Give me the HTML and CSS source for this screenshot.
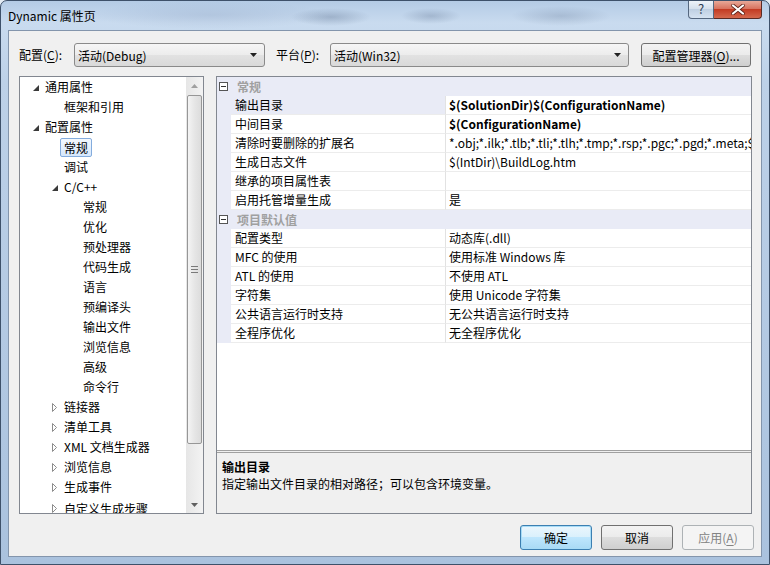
FILE: index.html
```html
<!DOCTYPE html>
<html lang="zh-CN">
<head>
    <meta charset="UTF-8">
    <title>Dynamic 属性页</title>
    <link rel="stylesheet" href="styles.css">
</head>
<body>
<div class="window">
    <div class="titlebar">
        <span class="title">Dynamic 属性页</span>
        <div class="caption">
            <div class="cap-help">?</div>
            <div class="cap-close">
                <svg width="14" height="11" viewBox="0 0 14 11">
                    <path d="M2 1.5L12 9.5M12 1.5L2 9.5" stroke="#5a1f16" stroke-width="3.6" stroke-linecap="round"/>
                    <path d="M2 1.5L12 9.5M12 1.5L2 9.5" stroke="#fff" stroke-width="2.2" stroke-linecap="round"/>
                </svg>
            </div>
        </div>
    </div>

    <div class="client">
        <div class="toolbar">
            <span class="lbl lbl-config">配置(<u>C</u>):</span>
            <div class="combo combo-config">
                <span>活动(Debug)</span>
                <svg width="7" height="4"><path d="M0 0H7L3.5 4Z" fill="#222"/></svg>
            </div>
            <span class="lbl lbl-platform">平台(<u>P</u>):</span>
            <div class="combo combo-platform">
                <span>活动(Win32)</span>
                <svg width="7" height="4"><path d="M0 0H7L3.5 4Z" fill="#222"/></svg>
            </div>
            <div class="btn btn-mgr">配置管理器(<u>O</u>)...</div>
        </div>

        <div class="main">
            <div class="tree">
                <div class="tree-list">
                    <div class="node l0"><span class="twisty open"><svg width="6" height="6"><path d="M6 0V6H0Z" fill="#3a3a3a"/></svg></span>通用属性</div>
                    <div class="node l1"><span class="twisty"></span>框架和引用</div>
                    <div class="node l0"><span class="twisty open"><svg width="6" height="6"><path d="M6 0V6H0Z" fill="#3a3a3a"/></svg></span>配置属性</div>
                    <div class="node l1"><span class="twisty"></span><span class="sel">常规</span></div>
                    <div class="node l1"><span class="twisty"></span>调试</div>
                    <div class="node l1"><span class="twisty open"><svg width="6" height="6"><path d="M6 0V6H0Z" fill="#3a3a3a"/></svg></span>C/C++</div>
                    <div class="node l2"><span class="twisty"></span>常规</div>
                    <div class="node l2"><span class="twisty"></span>优化</div>
                    <div class="node l2"><span class="twisty"></span>预处理器</div>
                    <div class="node l2"><span class="twisty"></span>代码生成</div>
                    <div class="node l2"><span class="twisty"></span>语言</div>
                    <div class="node l2"><span class="twisty"></span>预编译头</div>
                    <div class="node l2"><span class="twisty"></span>输出文件</div>
                    <div class="node l2"><span class="twisty"></span>浏览信息</div>
                    <div class="node l2"><span class="twisty"></span>高级</div>
                    <div class="node l2"><span class="twisty"></span>命令行</div>
                    <div class="node l1"><span class="twisty"><svg width="5" height="9"><path d="M0.5 0.5L4.5 4.5L0.5 8.5Z" fill="none" stroke="#8c8c8c"/></svg></span>链接器</div>
                    <div class="node l1"><span class="twisty"><svg width="5" height="9"><path d="M0.5 0.5L4.5 4.5L0.5 8.5Z" fill="none" stroke="#8c8c8c"/></svg></span>清单工具</div>
                    <div class="node l1"><span class="twisty"><svg width="5" height="9"><path d="M0.5 0.5L4.5 4.5L0.5 8.5Z" fill="none" stroke="#8c8c8c"/></svg></span>XML 文档生成器</div>
                    <div class="node l1"><span class="twisty"><svg width="5" height="9"><path d="M0.5 0.5L4.5 4.5L0.5 8.5Z" fill="none" stroke="#8c8c8c"/></svg></span>浏览信息</div>
                    <div class="node l1"><span class="twisty"><svg width="5" height="9"><path d="M0.5 0.5L4.5 4.5L0.5 8.5Z" fill="none" stroke="#8c8c8c"/></svg></span>生成事件</div>
                    <div class="node l1 last"><span class="twisty"><svg width="5" height="9"><path d="M0.5 0.5L4.5 4.5L0.5 8.5Z" fill="none" stroke="#8c8c8c"/></svg></span>自定义生成步骤</div>
                </div>
                <div class="vscroll">
                    <div class="sb-arrow"><svg width="7" height="4"><path d="M0 4H7L3.5 0Z" fill="#a0a0a0"/></svg></div>
                    <div class="thumb">
                        <div class="grip"></div>
                    </div>
                    <div class="sb-space"></div>
                    <div class="sb-arrow"><svg width="7" height="4"><path d="M0 0H7L3.5 4Z" fill="#606060"/></svg></div>
                </div>
            </div>

            <div class="props">
                <div class="grid">
                    <div class="cat"><span class="expander"></span>常规</div>
                    <div class="prop current"><span class="gut"></span><span class="name">输出目录</span><span class="val bold">$(SolutionDir)$(ConfigurationName)</span></div>
                    <div class="prop"><span class="gut"></span><span class="name">中间目录</span><span class="val bold">$(ConfigurationName)</span></div>
                    <div class="prop"><span class="gut"></span><span class="name">清除时要删除的扩展名</span><span class="val">*.obj;*.ilk;*.tlb;*.tli;*.tlh;*.tmp;*.rsp;*.pgc;*.pgd;*.meta;$</span></div>
                    <div class="prop"><span class="gut"></span><span class="name">生成日志文件</span><span class="val">$(IntDir)\BuildLog.htm</span></div>
                    <div class="prop"><span class="gut"></span><span class="name">继承的项目属性表</span><span class="val"></span></div>
                    <div class="prop"><span class="gut"></span><span class="name">启用托管增量生成</span><span class="val">是</span></div>
                    <div class="cat"><span class="expander"></span>项目默认值</div>
                    <div class="prop"><span class="gut"></span><span class="name">配置类型</span><span class="val">动态库(.dll)</span></div>
                    <div class="prop"><span class="gut"></span><span class="name">MFC 的使用</span><span class="val">使用标准 Windows 库</span></div>
                    <div class="prop"><span class="gut"></span><span class="name">ATL 的使用</span><span class="val">不使用 ATL</span></div>
                    <div class="prop"><span class="gut"></span><span class="name">字符集</span><span class="val">使用 Unicode 字符集</span></div>
                    <div class="prop"><span class="gut"></span><span class="name">公共语言运行时支持</span><span class="val">无公共语言运行时支持</span></div>
                    <div class="prop"><span class="gut"></span><span class="name">全程序优化</span><span class="val">无全程序优化</span></div>
                </div>
                <div class="desc">
                    <div class="desc-title">输出目录</div>
                    <div>指定输出文件目录的相对路径；可以包含环境变量。</div>
                </div>
            </div>
        </div>

        <div class="footer">
            <div class="btn btn-default">确定</div>
            <div class="btn">取消</div>
            <div class="btn btn-disabled">应用(<u>A</u>)</div>
        </div>
    </div>
</div>
</body>
</html>
```

FILE: styles.css
```css
*{
    box-sizing: border-box;
}
body{
    margin: 0;
    width: 770px;
    height: 565px;
    overflow: hidden;
    background: #e4ecf4;
    font-family: "Noto Sans CJK SC", "Noto Sans", sans-serif;
    font-size: 12px;
    color: #000;
}
u{
    text-decoration: underline;
    text-underline-offset: 2px;
}

/* window frame */
.window{
    width: 770px;
    height: 565px;
    border: 1px solid #3e516a;
    border-radius: 7px 7px 0 0;
    background: linear-gradient(to bottom, #b4cbe5 0, #c9dbef 22px, #bdd1e8 80px, #aac2de 100%);
    display: flex;
    flex-direction: column;
}
.titlebar{
    height: 29px;
    display: flex;
    justify-content: space-between;
    align-items: flex-start;
    padding: 0 7px 0 7px;
    background:
        radial-gradient(ellipse 40px 9px at 330px 16px, rgba(90,110,140,0.35), transparent),
        radial-gradient(ellipse 30px 8px at 430px 15px, rgba(90,110,140,0.3), transparent),
        radial-gradient(ellipse 50px 10px at 560px 15px, rgba(90,110,140,0.25), transparent),
        radial-gradient(ellipse 120px 14px at 210px 14px, rgba(150,170,200,0.35), transparent);
}
.title{
    line-height: 29px;
}
.caption{
    display: flex;
}
.cap-help{
    width: 26px;
    height: 18px;
    border: 1px solid #55677f;
    border-top: none;
    border-radius: 0 0 0 4px;
    background: linear-gradient(#eef3f9, #d3deeb 50%, #bfcfe2 50%, #d6e3f1);
    color: #2e3d52;
    font-size: 13px;
    line-height: 16px;
    text-align: center;
}
.cap-close{
    width: 48px;
    height: 18px;
    border: 1px solid #5a2a24;
    border-top: none;
    border-left: none;
    border-radius: 0 0 4px 0;
    background: linear-gradient(#e8a898, #d8735f 45%, #c33b23 50%, #d4684d);
    display: flex;
    align-items: center;
    justify-content: center;
}

/* client area */
.client{
    flex: 1;
    margin: 0 7px 7px;
    border: 1px solid #8395ac;
    background: #f0f0f0;
    padding: 12px 0 0 10px;
    display: flex;
    flex-direction: column;
}
.toolbar{
    display: flex;
    align-items: center;
    height: 24px;
}
.lbl{
    line-height: 24px;
    flex-shrink: 0;
}
.lbl-config{
    width: 55px;
}
.lbl-platform{
    width: 54px;
    margin-left: 11px;
}
.combo{
    flex-shrink: 0;
    height: 24px;
    border: 1px solid #8a8a8a;
    border-radius: 3px;
    background: linear-gradient(#f6f6f6, #ececec 50%, #e2e2e2 50%, #d9d9d9);
    display: flex;
    align-items: center;
    justify-content: space-between;
    padding: 0 7px 0 3px;
}
.combo-config{
    width: 191px;
}
.combo-platform{
    width: 299px;
}
.btn{
    flex-shrink: 0;
    width: 72px;
    height: 25px;
    border: 1px solid #707070;
    border-radius: 3px;
    background: linear-gradient(#f3f3f3, #ebebeb 50%, #dddddd 50%, #cfcfcf);
    display: flex;
    align-items: center;
    justify-content: center;
}
.btn-mgr{
    width: 110px;
    height: 24px;
    margin-left: 12px;
}
.btn-default{
    border-color: #3c7fb1;
    background: linear-gradient(#eaf6fd, #d9f0fc 50%, #bee6fd 50%, #a9daf5);
    box-shadow: inset 0 0 0 1px #a7dcf7;
}
.btn-disabled{
    border-color: #adb2b5;
    background: #f4f4f4;
    color: #838383;
}

.main{
    display: flex;
    gap: 12px;
    margin-top: 9px;
    height: 438px;
}

/* tree view */
.tree{
    width: 185px;
    flex-shrink: 0;
    border: 1px solid #828790;
    background: #fff;
    display: flex;
}
.tree-list{
    flex: 1;
    min-width: 0;
    overflow: hidden;
}
.node{
    height: 20px;
    display: flex;
    align-items: center;
    white-space: nowrap;
    line-height: 20px;
}
.node.last{
    line-height: 24px;
    align-items: flex-start;
}
.node.last .twisty{
    padding-top: 2px;
}
.l0{
    padding-left: 6px;
}
.l1{
    padding-left: 25px;
}
.l2{
    padding-left: 44px;
}
.twisty{
    width: 19px;
    height: 20px;
    display: flex;
    align-items: center;
    justify-content: center;
    flex-shrink: 0;
}
.twisty.open svg{
    margin: 2px 0 0 1px;
}
.sel{
    margin-left: -4px;
    padding: 0 3px;
    line-height: 17px;
    border: 1px solid #84acdd;
    border-radius: 2px;
    background: linear-gradient(#f3f8fe, #d5e7fc);
}
.vscroll{
    width: 17px;
    flex-shrink: 0;
    background: linear-gradient(to right, #e6e6e6, #f3f3f3);
    display: flex;
    flex-direction: column;
}
.sb-arrow{
    height: 17px;
    display: flex;
    align-items: center;
    justify-content: center;
}
.thumb{
    margin: 1px 1px 0;
    height: 349px;
    border: 1px solid #979797;
    border-radius: 2px;
    background: linear-gradient(to right, #f4f4f4, #e6e6e6 50%, #dcdcdc);
    display: flex;
    align-items: center;
    justify-content: center;
}
.grip{
    width: 7px;
    height: 7px;
    border-top: 1px solid #7a7a7a;
    border-bottom: 1px solid #7a7a7a;
    background: linear-gradient(#7a7a7a, #7a7a7a) center / 7px 1px no-repeat;
}
.sb-space{
    flex: 1;
}

/* property grid */
.props{
    width: 536px;
    flex-shrink: 0;
    min-width: 0;
    border: 1px solid #828790;
    background: #f0f0f0;
    display: flex;
    flex-direction: column;
}
.grid{
    height: 374px;
    background: #fff;
    border-bottom: 1px solid #a0a0a0;
    overflow: hidden;
}
.cat{
    height: 19px;
    display: flex;
    align-items: center;
    background: #e9ebf6;
    color: #a0a0a0;
    font-weight: bold;
    line-height: 19px;
}
.expander{
    width: 9px;
    height: 9px;
    margin: 0 9px 0 2px;
    border: 1px solid #555;
    background: linear-gradient(#333, #333) center / 5px 1px no-repeat, #fff;
}
.prop{
    height: 19px;
    display: flex;
    line-height: 18px;
}
.gut{
    width: 14px;
    background: #e9ebf6;
    flex-shrink: 0;
}
.name{
    width: 215px;
    flex-shrink: 0;
    padding-left: 4px;
    border-right: 1px solid #e2e2e2;
    border-bottom: 1px solid #ececec;
}
.prop.current .name{
    background: #e9ebf6;
}
.val{
    flex: 1;
    min-width: 0;
    padding-left: 3px;
    border-bottom: 1px solid #ececec;
    white-space: nowrap;
    overflow: hidden;
}
.bold{
    font-weight: bold;
}
.desc{
    flex: 1;
    margin-top: 1px;
    border-top: 1px solid #a0a0a0;
    padding: 5px 5px 0;
    line-height: 17px;
}
.desc-title{
    font-weight: bold;
}

.footer{
    display: flex;
    justify-content: flex-end;
    gap: 9px;
    margin-top: 11px;
    padding-right: 7px;
}
```
